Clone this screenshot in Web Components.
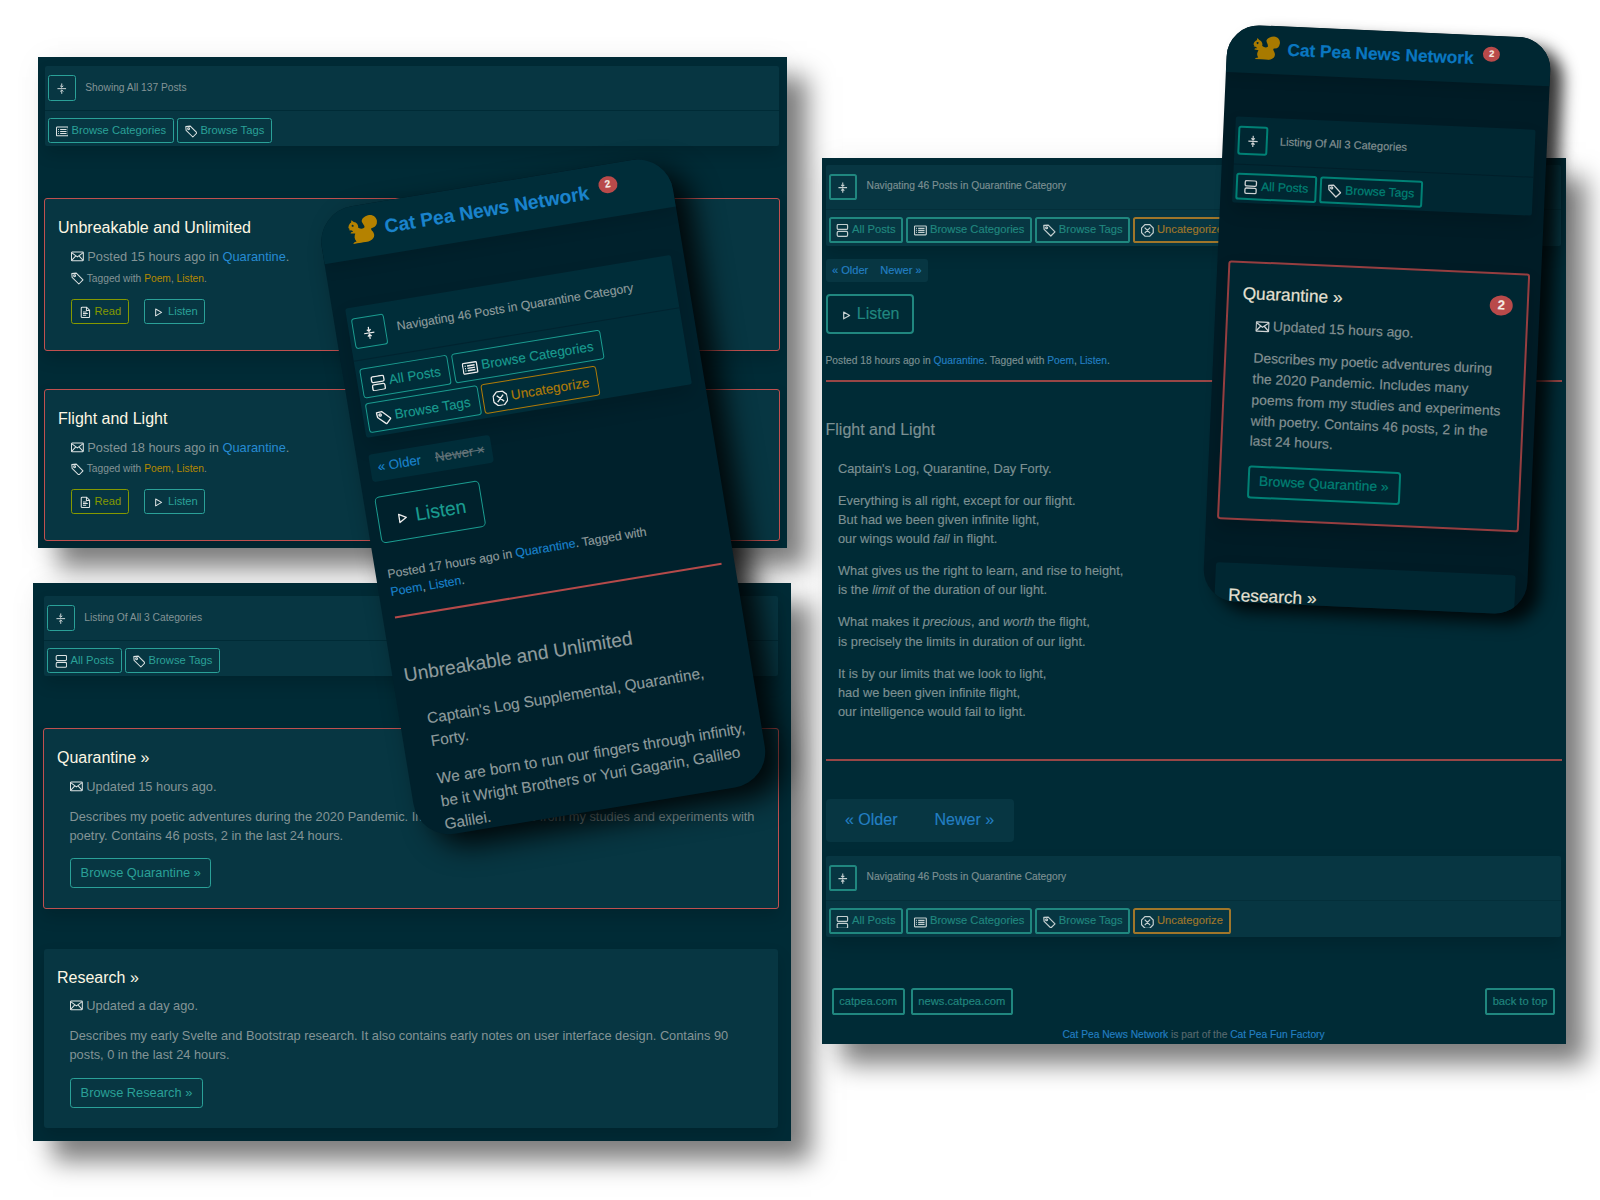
<!DOCTYPE html>
<html lang="en">
<head>
<meta charset="utf-8">
<title>Cat Pea News Network</title>
<style>
html,body{margin:0;padding:0;background:#fff}
body{width:1600px;height:1200px;overflow:hidden;font-family:"Liberation Sans",Arial,sans-serif}
</style>
</head>
<body>
<cp-stage></cp-stage>
<script>
const ICONS = {
  collapse: '<path d="M2 8h12M8 .8v5M8 15.2v-5M5.8 4 8 6.2 10.200 4M5.800 12 8 9.800 10.200 12"/>',
  list: '<rect x=".6" y="2.500" width="14.800" height="11" rx="1"/><path d="M5.200 5.500h8M5.200 8h8M5.200 10.500h8M2.700 5.500h1M2.700 8h1M2.700 10.500h1"/>',
  stack: '<rect x="1.500" y=".600" width="13" height="6.200" rx="1.600"/><rect x="1.500" y="9.200" width="13" height="6.200" rx="1.600"/>',
  tag: '<path d="M1 1.800 6.600 1.400 15 9.800 9.800 15 1.400 6.800Z" stroke-linejoin="round"/><circle cx="4.500" cy="4.700" r="1.200"/>',
  octx: '<path d="M5 .7h6L15.300 5v6L11 15.300H5L.7 11V5ZM4.600 4.600l6.800 6.800M11.400 4.600l-6.800 6.800"/>',
  mail: '<rect x=".6" y="2.600" width="14.800" height="10.800" rx=".8"/><path d="M.8 3.300 8 8.600l7.200-5.300M.8 12.900 6 7.300M15.200 12.900 10 7.300"/>',
  file: '<path d="M9.500 1.500H4a1.200 1.200 0 0 0-1.200 1.200v10.600A1.200 1.200 0 0 0 4 14.500h8a1.200 1.200 0 0 0 1.200-1.200V5.200ZM9.300 1.500v4h4M5 7.500h4.500M5 9.500h6M5 11.500h4"/>',
  play: '<path d="M4.600 3.800 12 8l-7.400 4.300Z" stroke-linejoin="round"/>'
};
const BASE = '*{box-sizing:border-box}a{color:var(--link);text-decoration:none}';
function define(name, css, html) {
  customElements.define(name, class extends HTMLElement {
    constructor() { super(); this.attachShadow({mode: 'open'}); }
    connectedCallback() {
      this.shadowRoot.innerHTML = '<style>' + BASE + css + '</style>' + (typeof html === 'function' ? html(this) : html);
    }
  });
}

define('cp-icon', ':host{display:inline-block;flex:none;width:calc(var(--r)*12.8);height:calc(var(--r)*12.8)}svg{display:block;width:100%;height:100%;fill:none;stroke:var(--ico);stroke-width:var(--sw,1.3)}',
  el => `<svg viewBox="0 0 16 16">${ICONS[el.getAttribute('name')]}</svg>`);

define('cp-badge', `:host{display:flex;align-items:center;justify-content:center;width:calc(var(--r)*15.8);height:calc(var(--r)*14);border-radius:50%;background:#b94a4a;color:#f4ece4;font-weight:700;font-size:calc(var(--r)*8.6);line-height:1}
:host([big]){width:calc(var(--r)*21.5);height:calc(var(--r)*19);font-size:calc(var(--r)*12)}`, '<slot></slot>');

define('cp-btn', `:host{box-sizing:border-box;display:flex;align-items:center;height:var(--bh,calc(var(--r)*25));padding:0 calc(var(--r)*7.65 - var(--bw,1px));border:var(--bw,1px) solid var(--teal);border-radius:calc(var(--r)*2.6);color:var(--teal);font-size:calc(var(--r)*11.2);white-space:nowrap;gap:calc(var(--r)*3.1);line-height:1}
:host([tone=gold]){color:var(--gold);border-color:var(--gold)}
:host([tone=green]){color:#859900;border-color:#859900}
:host([size=md]){height:calc(var(--r)*30.5);padding:0 calc(var(--r)*10.6 - var(--bw,1px));font-size:calc(var(--r)*12.8);border-radius:calc(var(--r)*3.2)}
:host([size=lg]){height:calc(var(--r)*39);padding:0 calc(var(--r)*14.1 - var(--bw,1px));font-size:calc(var(--r)*16);gap:calc(var(--r)*4.4);border-radius:calc(var(--r)*4)}
cp-icon{transform:translateY(calc(var(--r)*1))}`,
  el => (el.hasAttribute('icon') ? `<cp-icon name="${el.getAttribute('icon')}"></cp-icon>` : '') + '<span><slot></slot></span>');

define('cp-nav', `:host{display:block;background:var(--panel);border-radius:calc(var(--r)*2);box-shadow:0 calc(var(--r)*8) calc(var(--r)*16) rgba(0,0,0,.15)}
.head{display:flex;align-items:center;height:calc(var(--r)*45);padding:0 calc(var(--r)*3);border-bottom:1px solid var(--rule);font-size:calc(var(--r)*10.24);color:var(--text);gap:var(--hg,calc(var(--r)*9.3))}
.head span{position:relative;top:var(--ht,calc(var(--r)*-1))}
.toggle{display:flex;align-items:center;justify-content:center;width:calc(var(--r)*28);height:calc(var(--r)*26);border:var(--bw,1px) solid var(--teal);border-radius:calc(var(--r)*2.6)}
.toggle cp-icon{transform:translateY(calc(var(--r)*.9));width:calc(var(--r)*11.5);height:calc(var(--r)*11.5)}
.row{display:flex;flex-wrap:wrap;gap:calc(var(--r)*4.200) calc(var(--r)*3.2);padding:calc(var(--r)*7) calc(var(--r)*3) calc(var(--r)*3)}`,
  el => `<div class="head"><div class="toggle"><cp-icon name="collapse"></cp-icon></div><span>${el.getAttribute('heading')}</span></div><div class="row"><slot></slot></div>`);

define('cp-pager', `:host{box-sizing:border-box;display:flex;width:max-content;align-items:center;height:calc(var(--r)*23.5);padding:0 calc(var(--r)*6.4);gap:calc(var(--r)*12);background:var(--panel);border-radius:calc(var(--r)*3);font-size:calc(var(--r)*11.1);color:var(--link);white-space:nowrap;line-height:1}
:host([big]){height:43px;padding:0 19.500px;gap:37px;font-size:16px;border-radius:4px}
s{color:var(--off)}`,
  el => `<span>« Older</span>` + (el.hasAttribute('last') ? '<s>Newer ×</s>' : '<span>Newer »</span>'));

define('cp-meta', `:host{display:flex;align-items:center;gap:calc(var(--r)*3.5);height:calc(var(--r)*19.2);font-size:calc(var(--r)*12.8);line-height:calc(var(--r)*19.2);color:var(--text);white-space:nowrap}
:host([small]){height:calc(var(--r)*15.4);font-size:calc(var(--r)*10.24);line-height:calc(var(--r)*15.4);gap:calc(var(--r)*2.9)}`,
  el => `<cp-icon name="${el.getAttribute('icon')}"></cp-icon><span><slot></slot></span>`);

define('cp-card', `:host{box-sizing:border-box;display:block;background:var(--panel);border-radius:calc(var(--r)*3);padding:calc(var(--r)*16.5) calc(var(--r)*12);box-shadow:0 calc(var(--r)*8) calc(var(--r)*16) rgba(0,0,0,.15)}
:host([hot]){border:var(--bw,1px) solid var(--red);margin-left:-1px;margin-right:-1px}
.top{display:flex;justify-content:space-between;height:calc(var(--r)*24);line-height:calc(var(--r)*24);font-size:calc(var(--r)*16);color:var(--bright);padding-left:1px}
.body{display:flex;flex-direction:column;align-items:flex-start;padding:calc(var(--r)*7.5) 0 0 calc(var(--r)*14)}
cp-badge{margin-right:calc(var(--r)*.8);margin-top:calc(var(--r)*2.6)}`,
  el => `<div class="top"><span>${el.getAttribute('heading')}</span>${el.hasAttribute('count') ? `<cp-badge big>${el.getAttribute('count')}</cp-badge>` : ''}</div><div class="body"><slot></slot></div>`);

define('cp-text', `:host{display:block;font-size:calc(var(--r)*12.8);line-height:calc(var(--r)*19.200);color:var(--text);white-space:nowrap}
:host([small]){font-size:calc(var(--r)*10.24);line-height:calc(var(--r)*15.36)}
:host([title]){font-size:calc(var(--r)*16);line-height:calc(var(--r)*24)}
:host([desc]){margin:calc(var(--r)*10.700) 0 calc(var(--r)*12.400) -.5px}`, '<slot></slot>');

define('cp-buttons', ':host{display:flex;gap:15.500px;padding-top:12.500px}', '<slot></slot>');
define('cp-rule', ':host{display:block;height:var(--bw,1px);background:var(--red)}', '');

define('cp-window', `:host{box-sizing:border-box;position:absolute;display:flex;flex-direction:column;--r:1px;--panel:#073642;--rule:#002b36;--teal:#2aa198;--gold:#b58900;--link:#268bd2;--text:#839496;--bright:#fdf6e3;--red:#c0504f;--ico:#dde3e3;
background:#002b36;box-shadow:20px 20px 24px rgba(0,0,0,.5),0 0 30px rgba(0,0,0,.04);overflow:hidden}`, '<slot></slot>');

define('cp-phone', `:host{box-sizing:border-box;position:absolute;display:block;transform-origin:0 0;overflow:hidden;background:var(--bg);border-radius:calc(var(--r)*30)}
header{display:flex;align-items:flex-start;height:calc(var(--r)*44.300);padding-left:calc(var(--r)*24);background:var(--panel);box-shadow:0 calc(var(--r)*4) calc(var(--r)*12) rgba(0,0,0,.12)}
svg{width:calc(var(--r)*25);height:calc(var(--r)*23);margin:calc(var(--r)*8.800) calc(var(--r)*var(--ng,5.500)) 0 0;fill:var(--nut)}
b{font-size:calc(var(--r)*16);line-height:calc(var(--r)*24);margin-top:calc(var(--r)*10);color:var(--link);white-space:nowrap}
cp-badge{margin:calc(var(--r)*10) 0 0 calc(var(--r)*8.700)}
main{display:flex;flex-direction:column;padding:var(--mt,calc(var(--r)*39)) calc(var(--r)*10.800) 0}`,
  `<header><svg viewBox="0 0 86 76"><path fill-rule="evenodd" d="M13 7 19 13C27 15 31 23 29 31C36 37 43 37 47 33C49 27 41 20 42 13C45 4 56 0 66 0C78 1 86 10 85 21C84 31 79 37 70 38C63 38 64 42 68 48C75 60 69 72 52 75L8 75C8 71 12 70 18 69C12 61 14 53 18 46L5 44C5 41 8 39 13 40L10 36 2 34 4 31 1 27C3 19 7 15 11 14ZM14 20a3 3 0 1 0 .1 0Z"/></svg><b>Cat Pea News Network</b><cp-badge>2</cp-badge></header><main><slot></slot></main>`);

define('cp-stage', `:host{display:block;position:relative;width:1600px;height:1200px;background:#fff;overflow:hidden}
#posts{left:38px;top:57px;width:749px;height:491px;padding:9px 8px 0 7px}
#cats{left:33px;top:583px;width:758px;height:558px;padding:13px 13px 0 11px}
#article{left:821.500px;top:157.500px;width:744px;height:886px;padding:7px 4px 0 4px;--bw:2px;--bh:26px;--teal:#20877f;--gold:#a0762a;--link:#237fc2;--text:#7c9092;--red:#984646;--ico:#c4cfd0;--sw:1.5;--hg:10px;-webkit-text-stroke:.15px currentColor}
#article cp-nav{--rule:#042f3a;margin-right:1px}
#article cp-btn[size=lg]{height:40px}
#pa{--r:1.2px;left:315.700px;top:212px;width:356px;height:636px;transform:rotate(-9.350deg);--bg:#00212c;--panel:#002d39;--rule:#002430;--teal:#1a9c90;--gold:#b07c08;--link:#1a83cc;--nut:#b58200;--text:#8f9c9d;--off:#66757a;--red:#b54a4a;--ico:#ececec;--sw:1.4;--ht:0px;box-shadow:16px 14px 28px rgba(0,0,0,.85);-webkit-text-stroke:.12px currentColor}
#pb{--r:1.081px;left:1228.100px;top:24.400px;width:323.600px;height:577px;transform:rotate(2.550deg);--bg:#001c26;--panel:#002732;--rule:#001f2a;--teal:#008175;--link:#0a77c0;--nut:#a87a00;--text:#828f91;--bright:#e6e0d2;--red:#963e40;--ico:#cfd3d4;--bw:2px;--sw:1.5;--ng:7;--mt:43.800px;--hg:12px;--ht:0px;box-shadow:13px 9px 16px rgba(0,0,0,.8);-webkit-text-stroke:.2px currentColor}
.gold a{color:var(--gold)}
.poem{display:flex;flex-direction:column;gap:12.800px;padding-left:12.500px}
footer{display:flex;gap:6px;padding:0 6.500px 0 6px}
footer cp-btn{height:27px}
footer cp-btn:last-child{margin-left:auto}
.foot{color:#57696e;text-align:center}`,
`<cp-window id="posts">
  <cp-nav heading="Showing All 137 Posts"><cp-btn icon="list">Browse Categories</cp-btn><cp-btn icon="tag">Browse Tags</cp-btn></cp-nav>
  <cp-card hot heading="Unbreakable and Unlimited" style="margin-top:52px;height:153px">
    <cp-meta icon="mail">Posted 15 hours ago in <a>Quarantine</a>.</cp-meta>
    <cp-meta small icon="tag" class="gold" style="margin-top:4.800px">Tagged with <a>Poem</a>, <a>Listen</a>.</cp-meta>
    <cp-buttons><cp-btn icon="file" tone="green">Read</cp-btn><cp-btn icon="play">Listen</cp-btn></cp-buttons>
  </cp-card>
  <cp-card hot heading="Flight and Light" style="margin-top:38px;height:152px">
    <cp-meta icon="mail">Posted 18 hours ago in <a>Quarantine</a>.</cp-meta>
    <cp-meta small icon="tag" class="gold" style="margin-top:4.200px">Tagged with <a>Poem</a>, <a>Listen</a>.</cp-meta>
    <cp-buttons><cp-btn icon="file" tone="green">Read</cp-btn><cp-btn icon="play">Listen</cp-btn></cp-buttons>
  </cp-card>
</cp-window>
<cp-window id="cats">
  <cp-nav heading="Listing Of All 3 Categories"><cp-btn icon="stack">All Posts</cp-btn><cp-btn icon="tag">Browse Tags</cp-btn></cp-nav>
  <cp-card hot heading="Quarantine »" style="margin-top:52px;height:181px">
    <cp-meta icon="mail">Updated 15 hours ago.</cp-meta>
    <cp-text desc>Describes my poetic adventures during the 2020 Pandemic. Includes many poems from my studies and experiments with<br>poetry. Contains 46 posts, 2 in the last 24 hours.</cp-text>
    <cp-btn size="md">Browse Quarantine »</cp-btn>
  </cp-card>
  <cp-card heading="Research »" style="margin-top:40px;height:179px">
    <cp-meta icon="mail" style="margin-top:-.800px">Updated a day ago.</cp-meta>
    <cp-text desc style="margin-bottom:13.500px">Describes my early Svelte and Bootstrap research. It also contains early notes on user interface design. Contains 90<br>posts, 0 in the last 24 hours.</cp-text>
    <cp-btn size="md">Browse Research »</cp-btn>
  </cp-card>
</cp-window>
<cp-window id="article">
  <cp-nav heading="Navigating 46 Posts in Quarantine Category"><cp-btn icon="stack">All Posts</cp-btn><cp-btn icon="list">Browse Categories</cp-btn><cp-btn icon="tag">Browse Tags</cp-btn><cp-btn icon="octx" tone="gold">Uncategorize</cp-btn></cp-nav>
  <cp-pager style="margin-top:13px"></cp-pager>
  <div style="display:flex;margin-top:12px"><cp-btn size="lg" icon="play">Listen</cp-btn></div>
  <cp-text small style="margin-top:18.500px">Posted 18 hours ago in <a>Quarantine</a>. Tagged with <a>Poem</a>, <a>Listen</a>.</cp-text>
  <cp-rule style="margin-top:12.500px"></cp-rule>
  <cp-text title style="margin-top:35.200px">Flight and Light</cp-text>
  <div class="poem" style="margin-top:17.300px">
    <cp-text>Captain's Log, Quarantine, Day Forty.</cp-text>
    <cp-text>Everything is all right, except for our flight.<br>But had we been given infinite light,<br>our wings would <i>fail</i> in flight.</cp-text>
    <cp-text>What gives us the right to learn, and rise to height,<br>is the <i>limit</i> of the duration of our light.</cp-text>
    <cp-text>What makes it <i>precious</i>, and <i>worth</i> the flight,<br>is precisely the limits in duration of our light.</cp-text>
    <cp-text>It is by our limits that we look to light,<br>had we been given infinite flight,<br>our intelligence would fail to light.</cp-text>
  </div>
  <cp-rule style="margin-top:37.700px"></cp-rule>
  <cp-pager big style="margin-top:38px"></cp-pager>
  <cp-nav style="margin-top:14px" heading="Navigating 46 Posts in Quarantine Category"><cp-btn icon="stack">All Posts</cp-btn><cp-btn icon="list">Browse Categories</cp-btn><cp-btn icon="tag">Browse Tags</cp-btn><cp-btn icon="octx" tone="gold">Uncategorize</cp-btn></cp-nav>
  <footer style="margin-top:51px"><cp-btn>catpea.com</cp-btn><cp-btn>news.catpea.com</cp-btn><cp-btn>back to top</cp-btn></footer>
  <cp-text small class="foot" style="margin-top:12px"><a>Cat Pea News Network</a> is part of the <a>Cat Pea Fun Factory</a></cp-text>
</cp-window>
<cp-phone id="pa">
  <cp-nav heading="Navigating 46 Posts in Quarantine Category"><cp-btn icon="stack">All Posts</cp-btn><cp-btn icon="list">Browse Categories</cp-btn><cp-btn icon="tag">Browse Tags</cp-btn><cp-btn icon="octx" tone="gold">Uncategorize</cp-btn></cp-nav>
  <cp-pager last style="margin-top:17px;margin-left:-1px"></cp-pager>
  <div style="display:flex;margin-top:15px;margin-left:-1.500px"><cp-btn size="lg" icon="play">Listen</cp-btn></div>
  <cp-text small style="margin-top:22px;margin-left:-1.200px">Posted 17 hours ago in <a>Quarantine</a>. Tagged with<br><a>Poem</a>, <a>Listen</a>.</cp-text>
  <cp-rule style="margin-top:15.500px;margin-left:-1px;height:2px"></cp-rule>
  <cp-text title style="margin-top:44px;margin-left:-1.500px">Unbreakable and Unlimited</cp-text>
  <cp-text style="margin-top:18.500px;margin-left:14.500px">Captain's Log Supplemental, Quarantine,<br>Forty.</cp-text>
  <cp-text style="margin-top:15.400px;margin-left:14.500px">We are born to run our fingers through infinity,<br>be it Wright Brothers or Yuri Gagarin, Galileo<br>Galilei.</cp-text>
</cp-phone>
<cp-phone id="pb">
  <cp-nav heading="Listing Of All 3 Categories"><cp-btn icon="stack">All Posts</cp-btn><cp-btn icon="tag">Browse Tags</cp-btn></cp-nav>
  <cp-card hot count="2" heading="Quarantine »" style="margin-top:57.500px;height:259px;padding-top:18.500px">
    <cp-meta icon="mail">Updated 15 hours ago.</cp-meta>
    <cp-text desc>Describes my poetic adventures during<br>the 2020 Pandemic. Includes many<br>poems from my studies and experiments<br>with poetry. Contains 46 posts, 2 in the<br>last 24 hours.</cp-text>
    <cp-btn size="md" style="margin-left:-1px">Browse Quarantine »</cp-btn>
  </cp-card>
  <cp-card heading="Research »" style="margin-top:43px;height:120px;padding-top:20px"></cp-card>
</cp-phone>`);
</script>
</body>
</html>
